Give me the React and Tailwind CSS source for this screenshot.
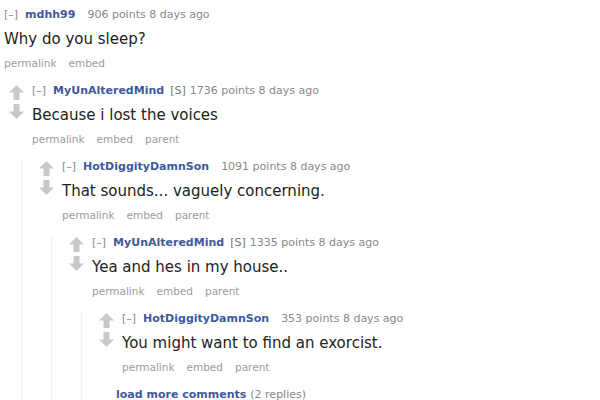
import React from 'react';

const font = { fontFamily: '"DejaVu Sans", Verdana, sans-serif' };

const Arrow = ({ down }) => (
  <svg
    width="15"
    height="15"
    viewBox="0 0 15 15"
    className={'block shrink-0 w-[15px] h-[15px]' + (down ? ' rotate-180' : '')}
  >
    <path d="M7.5 0 L15 7.5 L10.5 7.5 L10.5 15 L4.5 15 L4.5 7.5 L0 7.5 Z" fill="#c8c8c8" />
  </svg>
);

const Tagline = ({ author, submitter, points }) => (
  <div className="flex items-center h-[16px] text-[11px] leading-[16px] whitespace-nowrap">
    <span className="text-[#888]">[–]</span>
    <span className="ml-[7px] font-bold text-[#41599a]">{author}</span>
    {submitter && <span className="ml-[6px] text-[#777]">[S]</span>}
    <span className={(submitter ? 'ml-[4px]' : 'ml-[12px]') + ' text-[#888]'}>
      {points} points 8 days ago
    </span>
  </div>
);

const Buttons = ({ parent }) => (
  <div className="mt-[4px] flex gap-[12px] text-[10.5px] leading-[16px] text-[#9c9c9c]">
    <span>permalink</span>
    <span>embed</span>
    {parent && <span>parent</span>}
  </div>
);

const Comment = ({ author, submitter, points, body, children, extra }) => (
  <div>
    <div className="flex pb-[12px]">
      <div className="w-[15px] shrink-0 flex flex-col items-center pt-[2px] gap-[4px]">
        <Arrow />
        <Arrow down />
      </div>
      <div className="ml-[8px]">
        <Tagline author={author} submitter={submitter} points={points} />
        <p className="mt-[4px] text-[15px] leading-[24px] text-[#222] whitespace-nowrap">{body}</p>
        <Buttons parent />
      </div>
    </div>
    {(children || extra) && (
      <div className="ml-[12px] border-l border-[#f0f0f0] pl-[17px]">
        {children}
        {extra}
      </div>
    )}
  </div>
);

export default function App() {
  return (
    <div className="w-[600px] h-[400px] overflow-hidden bg-white" style={font}>
      <div className="pt-[7px] pl-[4px]">
        <div className="pb-[12px]">
          <Tagline author="mdhh99" points="906" />
          <p className="mt-[4px] text-[15px] leading-[24px] text-[#222]">Why do you sleep?</p>
          <Buttons />
        </div>
        <div className="pl-[5px]">
          <Comment author="MyUnAlteredMind" submitter points="1736" body="Because i lost the voices">
            <Comment author="HotDiggityDamnSon" points="1091" body="That sounds... vaguely concerning.">
              <Comment author="MyUnAlteredMind" submitter points="1335" body="Yea and hes in my house..">
                <Comment
                  author="HotDiggityDamnSon"
                  points="353"
                  body="You might want to find an exorcist."
                />
                <div className="pl-[17px] text-[11px] leading-[16px] whitespace-nowrap">
                  <span className="font-bold text-[#41599a]">load more comments</span>
                  <span className="ml-[4px] text-[#888]">(2 replies)</span>
                </div>
              </Comment>
            </Comment>
          </Comment>
        </div>
      </div>
    </div>
  );
}
